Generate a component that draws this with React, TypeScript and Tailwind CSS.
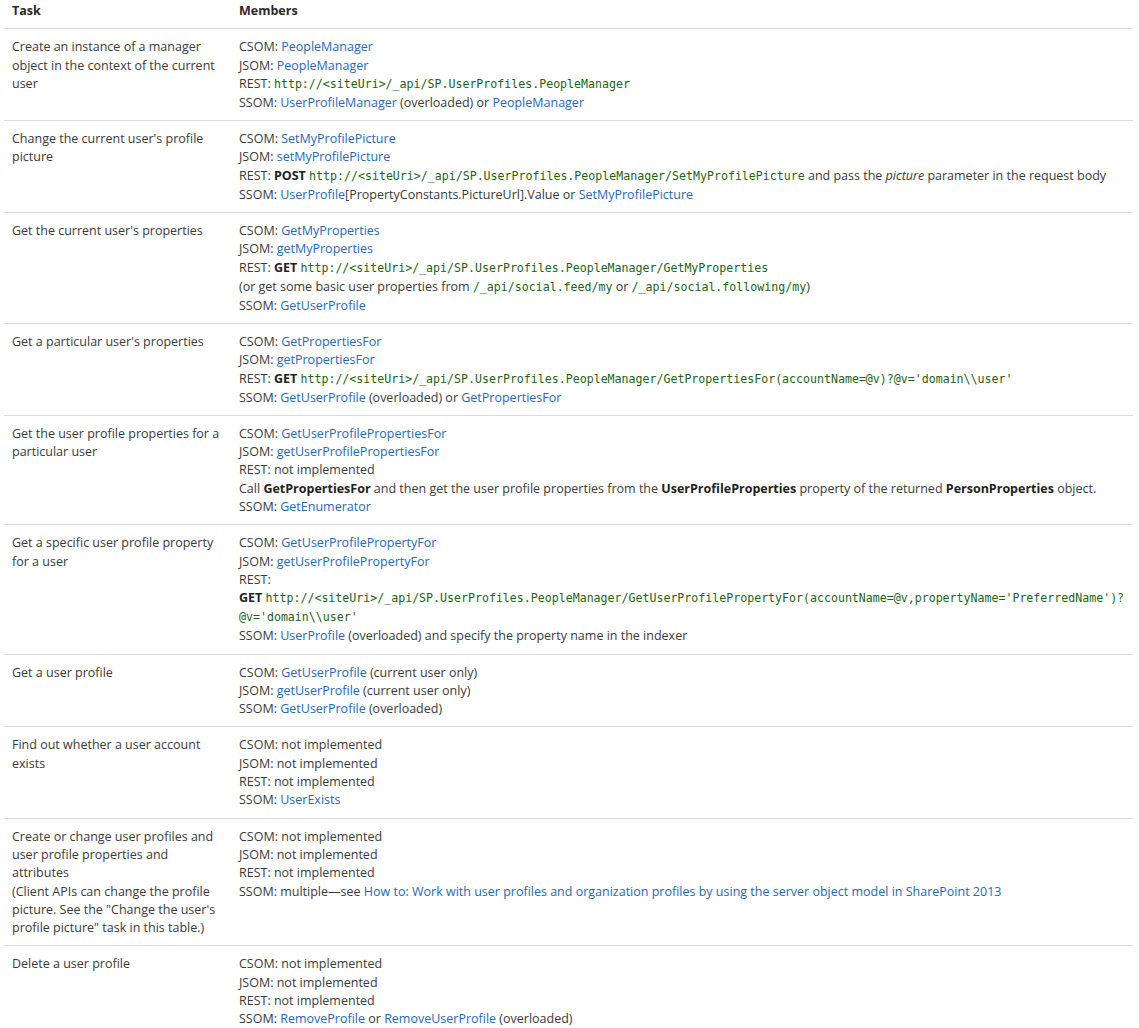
import React from 'react';

// Small helpers for the three inline styles used in the table
const A = ({ children }: { children: React.ReactNode }) => (
  <span className="text-[#2768b8]">{children}</span>
);

const C = ({ children }: { children: React.ReactNode }) => (
  <code className="font-['DejaVu_Sans_Mono',monospace] text-[11.6px] leading-[19px] text-[#1d6414]">{children}</code>
);

const B = ({ children }: { children: React.ReactNode }) => (
  <b className="font-bold text-[#222]">{children}</b>
);

type Row = { task: string[]; members: React.ReactNode[] };

const URI = 'http://<siteUri>/_api/SP.UserProfiles.PeopleManager';

const rows: Row[] = [
  {
    task: ['Create an instance of a manager', 'object in the context of the current', 'user'],
    members: [
      <>CSOM: <A>PeopleManager</A></>,
      <>JSOM: <A>PeopleManager</A></>,
      <>REST: <C>{URI}</C></>,
      <>SSOM: <A>UserProfileManager</A> (overloaded) or <A>PeopleManager</A></>,
    ],
  },
  {
    task: ["Change the current user's profile", 'picture'],
    members: [
      <>CSOM: <A>SetMyProfilePicture</A></>,
      <>JSOM: <A>setMyProfilePicture</A></>,
      <>REST: <B>POST</B> <C>{URI + '/SetMyProfilePicture'}</C> and pass the <i>picture</i> parameter in the request body</>,
      <>SSOM: <A>UserProfile</A>[PropertyConstants.PictureUrl].Value or <A>SetMyProfilePicture</A></>,
    ],
  },
  {
    task: ["Get the current user's properties"],
    members: [
      <>CSOM: <A>GetMyProperties</A></>,
      <>JSOM: <A>getMyProperties</A></>,
      <>REST: <B>GET</B> <C>{URI + '/GetMyProperties'}</C></>,
      <>(or get some basic user properties from <C>/_api/social.feed/my</C> or <C>/_api/social.following/my</C>)</>,
      <>SSOM: <A>GetUserProfile</A></>,
    ],
  },
  {
    task: ["Get a particular user's properties"],
    members: [
      <>CSOM: <A>GetPropertiesFor</A></>,
      <>JSOM: <A>getPropertiesFor</A></>,
      <>REST: <B>GET</B> <C>{URI + "/GetPropertiesFor(accountName=@v)?@v='domain\\\\user'"}</C></>,
      <>SSOM: <A>GetUserProfile</A> (overloaded) or <A>GetPropertiesFor</A></>,
    ],
  },
  {
    task: ['Get the user profile properties for a', 'particular user'],
    members: [
      <>CSOM: <A>GetUserProfilePropertiesFor</A></>,
      <>JSOM: <A>getUserProfilePropertiesFor</A></>,
      <>REST: not implemented</>,
      <>Call <B>GetPropertiesFor</B> and then get the user profile properties from the <B>UserProfileProperties</B> property of the returned <B>PersonProperties</B> object.</>,
      <>SSOM: <A>GetEnumerator</A></>,
    ],
  },
  {
    task: ['Get a specific user profile property', 'for a user'],
    members: [
      <>CSOM: <A>GetUserProfilePropertyFor</A></>,
      <>JSOM: <A>getUserProfilePropertyFor</A></>,
      <>REST:</>,
      <><B>GET</B> <C>{URI + "/GetUserProfilePropertyFor(accountName=@v,propertyName='PreferredName')?"}</C></>,
      <><C>{"@v='domain\\\\user'"}</C></>,
      <>SSOM: <A>UserProfile</A> (overloaded) and specify the property name in the indexer</>,
    ],
  },
  {
    task: ['Get a user profile'],
    members: [
      <>CSOM: <A>GetUserProfile</A> (current user only)</>,
      <>JSOM: <A>getUserProfile</A> (current user only)</>,
      <>SSOM: <A>GetUserProfile</A> (overloaded)</>,
    ],
  },
  {
    task: ['Find out whether a user account', 'exists'],
    members: [
      <>CSOM: not implemented</>,
      <>JSOM: not implemented</>,
      <>REST: not implemented</>,
      <>SSOM: <A>UserExists</A></>,
    ],
  },
  {
    task: [
      'Create or change user profiles and',
      'user profile properties and',
      'attributes',
      '(Client APIs can change the profile',
      'picture. See the "Change the user\'s',
      'profile picture" task in this table.)',
    ],
    members: [
      <>CSOM: not implemented</>,
      <>JSOM: not implemented</>,
      <>REST: not implemented</>,
      <>SSOM: multiple—see <A>How to: Work with user profiles and organization profiles by using the server object model in SharePoint 2013</A></>,
    ],
  },
  {
    task: ['Delete a user profile'],
    members: [
      <>CSOM: not implemented</>,
      <>JSOM: not implemented</>,
      <>REST: not implemented</>,
      <>SSOM: <A>RemoveProfile</A> or <A>RemoveUserProfile</A> (overloaded)</>,
    ],
  },
];

export default function App() {
  return (
    <div className="bg-white min-h-screen px-[4px] font-['Open_Sans',sans-serif] text-[12.5px] leading-[18.3px] text-[#3a3a3a]">
      <div className="w-[1129px]">
        <div className="grid grid-cols-[227px_1fr] border-b border-[#dcdcdc] pt-[2px] pb-[8px] font-bold text-[#2a2a2a]">
          <div className="px-2">Task</div>
          <div className="px-2">Members</div>
        </div>
        {rows.map((row, i) => (
          <div key={i} className="grid grid-cols-[227px_1fr] border-b border-[#dcdcdc] pt-[9px] pb-[8px] last:border-b-0">
            <div className="px-2">
              {row.task.map((t, j) => (
                <div key={j} className="whitespace-nowrap">{t}</div>
              ))}
            </div>
            <div className="px-2">
              {row.members.map((m, j) => (
                <div key={j} className="whitespace-nowrap">{m}</div>
              ))}
            </div>
          </div>
        ))}
      </div>
    </div>
  );
}
